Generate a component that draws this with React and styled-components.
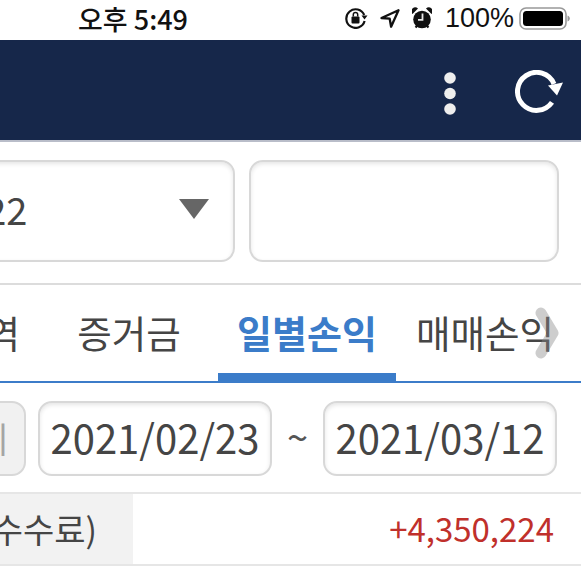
import React from "react";
import styled, { createGlobalStyle } from "styled-components";

const Global = createGlobalStyle`
  html, body { margin: 0; padding: 0; background: #fff; }
  body { font-family: "Noto Sans CJK KR", "Noto Sans", sans-serif; }
  * { box-sizing: border-box; }
`;
const Page = styled.div`
  width: 581px; height: 566px; overflow: hidden; position: relative; background: #fff; color: #454545;
`;
const StatusBar = styled.div`
  height: 40px; display: flex; align-items: center; color: #111; padding-bottom: 4px;
`;
const Clock = styled.div`
  margin-left: 78px; width: 112px; font-size: 27px; font-weight: 500; white-space: nowrap; line-height: 1; font-family: "Noto Sans CJK KR", sans-serif;
`;
const StatusIcons = styled.div`
  margin-left: auto; margin-right: 11px; display: flex; align-items: center; gap: 12px;
`;
const Percent = styled.span`
  font-family: "Liberation Sans", sans-serif; font-size: 27px; line-height: 1; margin-left: 1px; margin-right: -7px; color: #111;
`;
const NavBar = styled.div`
  height: 100px; background: #16274a; display: flex; align-items: center; justify-content: flex-end; padding: 3px 18px 0 0; gap: 59px;
  box-shadow: 0 2px 0 #b9bdc9;
`;
const DotsIcon = styled.svg`
  margin-top: 4px;
`;
const Filters = styled.div`
  display: flex; gap: 14px; margin: 20px 0 0 -100px; height: 102px;
`;
const Box = styled.div`
  border: 2px solid #d8d8d8; border-radius: 14px; box-shadow: inset 0 2px 4px rgba(0,0,0,.1); background: #fff;
`;
const SelectBox = styled(Box)`
  width: 335px; display: flex; align-items: center; justify-content: space-between; padding: 0 24px 4px 0; font-size: 38px;
`;
const SelectValue = styled.span`
  margin-left: 20px; line-height: 1;
`;
const Arrow = styled.span`
  width: 0; height: 0; border-left: 15px solid transparent; border-right: 15px solid transparent; border-top: 20px solid #666;
`;
const EmptyBox = styled(Box)`
  width: 310px;
`;
const Rule = styled.div`
  height: 2px; background: #dcdcdc;
`;
const FilterRule = styled(Rule)`
  margin-top: 21px;
`;
const Tabs = styled.div`
  display: flex; height: 96px; margin-left: -138px; width: 760px;
`;
const TabLine = styled.div`
  height: 2px; background: #3c7cc9;
`;
const Tab = styled.div`
  flex: 0 0 178px; display: flex; align-items: center; justify-content: center; white-space: nowrap;
  height: 96px; padding-top: 5px;
  font-size: ${p => p.$active ? "38px" : "37.5px"};
  color: ${p => p.$active ? "#3b7cc9" : "#454545"};
  font-weight: ${p => p.$active ? 700 : 400};
  border-bottom: ${p => p.$active ? "8px solid #3b7cc9" : "0"};
  padding-bottom: ${p => p.$active ? "0" : "8px"};
`;
const MoreHint = styled.svg`
  position: absolute; left: 534px; top: 306px;
`;
const DateRow = styled.div`
  display: flex; align-items: center; height: 109px; margin-left: -60px; padding-top: 2px;
`;
const SearchButton = styled.div`
  width: 86px; height: 75px; border: 2px solid #d8d8d8; border-radius: 14px; background: #f1f1f1; color: #a5a5a5;
  font-size: 35px; display: flex; align-items: center; justify-content: flex-end; padding: 0 16px 2px 0; overflow: hidden; white-space: nowrap;
`;
const DateBox = styled(Box)`
  width: 234px; height: 75px; display: flex; align-items: center; justify-content: center; font-size: 40px; line-height: 1; padding-bottom: 3px;
`;
const FirstDate = styled(DateBox)`
  margin-left: 12px;
`;
const Tilde = styled.span`
  width: 51px; text-align: center; font-size: 38px; color: #555; line-height: 1; padding-bottom: 6px;
`;
const SummaryRule = styled(Rule)`
  background: #e6e6e6;
`;
const Summary = styled.div`
  display: flex; height: 72px; border-bottom: 2px solid #e6e6e6;
`;
const SummaryLabel = styled.div`
  width: 133px; background: #f2f2f2; font-size: 34px; display: flex; align-items: center; justify-content: flex-end;
  padding: 0 36px 2px 0; white-space: nowrap; overflow: hidden;
`;
const SummaryValue = styled.div`
  flex: 1; color: #c0302b; font-size: 33px; display: flex; align-items: center; justify-content: flex-end; padding: 0 27px 2px 0;
`;

const RotationLock = () => (
  <svg width="23" height="22" viewBox="0 0 23 22" fill="none">
    <path d="M19.2 8A9.3 9.3 0 1 0 19.6 14" stroke="#111" strokeWidth="2.2" />
    <path d="M16.5 8.5h6l-3 4z" fill="#111" />
    <rect x="6.5" y="9.5" width="8" height="7" rx="1" fill="#111" />
    <path d="M8.3 9.5V7.6a2.2 2.2 0 0 1 4.4 0v1.9" stroke="#111" strokeWidth="1.5" />
  </svg>
);
const Location = () => (
  <svg width="20" height="19" viewBox="0 0 20 19" fill="none">
    <path d="M18.5 1.2 1.5 9l8.2.7 1.4 8z" stroke="#111" strokeWidth="2.3" strokeLinejoin="round" />
  </svg>
);
const Alarm = () => (
  <svg width="20" height="22" viewBox="0 0 20 22">
    <circle cx="10" cy="12.5" r="8.8" fill="#111" />
    <path d="M0.5 7a3.8 3.8 0 0 1 5.5-5.5zM19.5 7a3.8 3.8 0 0 0-5.500-5.500z" fill="#111" />
    <path d="M3.500 20.500l2.500-2.500M16.500 20.500L14 18" stroke="#111" strokeWidth="2.200" />
    <path d="M10.500 6.500v6.300H6" fill="none" stroke="#e8e8e8" strokeWidth="1.800" />
  </svg>
);
const Battery = () => (
  <svg width="51" height="23" viewBox="0 0 51 23">
    <rect x="1" y="1" width="46" height="21" rx="6" fill="none" stroke="#999" strokeWidth="1.6" />
    <rect x="4" y="4" width="40" height="15" rx="3.500" fill="#000" />
    <path d="M48.500 8.500c1.500.5 2.300 1.600 2.300 3s-.8 2.500-2.300 3z" fill="#999" />
  </svg>
);
const Dots = () => (
  <DotsIcon width="12" height="43" viewBox="0 0 12 43">
    <circle cx="6" cy="6" r="5.800" fill="#eee" />
    <circle cx="6" cy="21.500" r="5.800" fill="#eee" />
    <circle cx="6" cy="37" r="5.800" fill="#eee" />
  </DotsIcon>
);
const Refresh = () => (
  <svg width="48" height="43" viewBox="0 0 48 43" fill="none">
    <path d="M39 14A19 19 0 1 0 37 32.400" stroke="#fff" strokeWidth="5" />
    <path d="M33 15.500 48 12.500 42 25.500z" fill="#fff" />
  </svg>
);

export default function App() {
  return (
    <Page>
      <Global />
      <StatusBar>
        <Clock>오후 5:49</Clock>
        <StatusIcons>
          <RotationLock />
          <Location />
          <Alarm />
          <Percent>100%</Percent>
          <Battery />
        </StatusIcons>
      </StatusBar>
      <NavBar>
        <Dots />
        <Refresh />
      </NavBar>
      <Filters>
        <SelectBox>
          <SelectValue>00122</SelectValue>
          <Arrow />
        </SelectBox>
        <EmptyBox />
      </Filters>
      <FilterRule />
      <Tabs>
        <Tab>거래내역</Tab>
        <Tab>증거금</Tab>
        <Tab $active>일별손익</Tab>
        <Tab>매매손익</Tab>
      </Tabs>
      <TabLine />
      <MoreHint width="26" height="54" viewBox="0 0 26 54">
        <path d="M7 7 19 27 7 47" fill="none" stroke="#888" strokeOpacity=".42" strokeWidth="11" strokeLinecap="round" strokeLinejoin="round" />
      </MoreHint>
      <DateRow>
        <SearchButton>전체</SearchButton>
        <FirstDate>2021/02/23</FirstDate>
        <Tilde>~</Tilde>
        <DateBox>2021/03/12</DateBox>
      </DateRow>
      <SummaryRule />
      <Summary>
        <SummaryLabel>(수수수료)</SummaryLabel>
        <SummaryValue>+4,350,224</SummaryValue>
      </Summary>
    </Page>
  );
}
